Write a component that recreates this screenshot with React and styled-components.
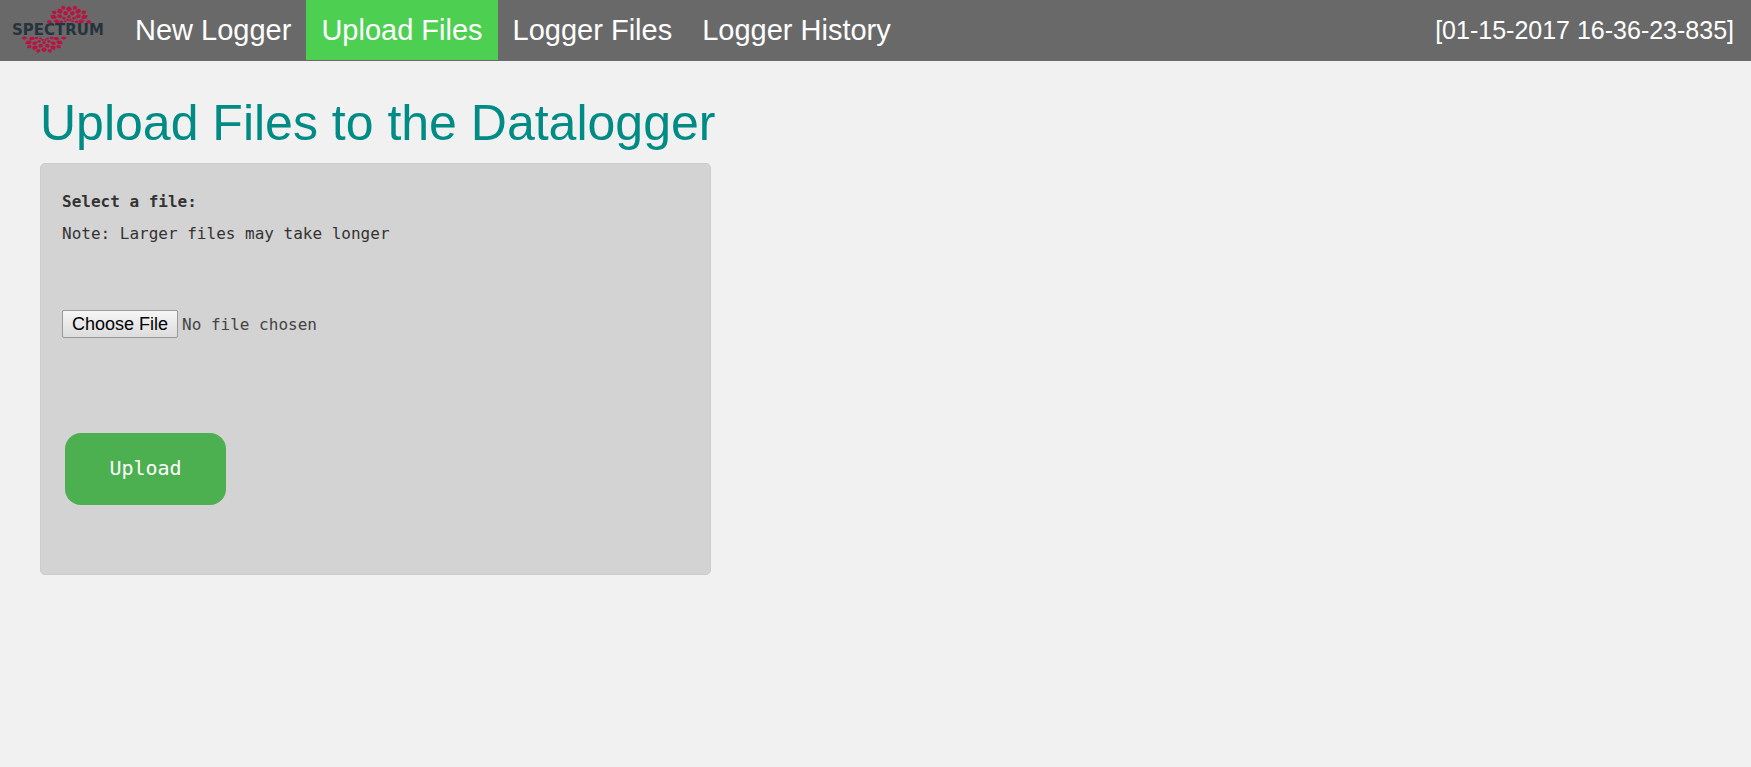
import React, { useId } from "react";
import styled, { createGlobalStyle } from "styled-components";

const sans = `"Liberation Sans", Arial, sans-serif`;
const mono = `"DejaVu Sans Mono", Consolas, monospace`;

const GlobalStyle = createGlobalStyle`
  *, *::before, *::after { box-sizing: border-box; }
  body {
    margin: 0;
    background: #f1f1f1;
    color: #333;
    font-family: ${sans};
  }
`;

const TopBar = styled.header`
  display: flex;
  align-items: flex-start;
  min-height: 61px;
  padding: 0 17px 0 12px;
  background: #696969;
`;

const LogoLink = styled.a`
  display: flex;
  padding-top: 4px;
  margin-right: 16px;
`;

const NavList = styled.nav`
  display: flex;
  flex: 1;
`;

const NavLink = styled.a`
  padding: 0 15px;
  font-size: 29px;
  line-height: 60px;
  color: #fff;
  text-decoration: none;
  white-space: nowrap;
  background: ${({ $active }) => ($active ? "#4dd052" : "transparent")};
`;

const Clock = styled.time`
  font-size: 25px;
  line-height: 60px;
  color: #fff;
  white-space: nowrap;
`;

const Page = styled.main`
  padding: 32px 40px;
`;

const Title = styled.h1`
  margin: 0 0 10px;
  font-size: 50px;
  font-weight: 400;
  line-height: 60px;
  color: #008b85;
`;

const UploadForm = styled.form`
  display: flex;
  flex-direction: column;
  align-items: flex-start;
  max-width: 671px;
  padding: 22px 21px 69px;
  font-family: ${mono};
  font-size: 16px;
  line-height: 32px;
  background: #d3d3d3;
  border: 1px solid #cbcbcb;
  border-radius: 5px;
`;

const FieldLabel = styled.label`
  font-weight: 700;
`;

const Note = styled.p`
  margin: 0;
`;

const FileInput = styled.input`
  margin: 60px 0 95px;
  height: 28px;
  font-family: ${mono};
  font-size: 16px;
  line-height: 28px;
  color: #444;

  &::file-selector-button {
    height: 28px;
    margin: 0 4px 0 0;
    padding: 0 9px;
    font-family: ${sans};
    font-size: 18px;
    line-height: 24px;
    color: #000;
    background: linear-gradient(#f6f6f6, #dcdcdc);
    border: 1px solid #9a9a9a;
    border-radius: 2px;
  }
`;

const UploadButton = styled.button`
  min-width: 161px;
  height: 72px;
  margin-left: 3px;
  padding-bottom: 3px;
  font-family: ${mono};
  font-size: 20px;
  color: #fff;
  background: #4caf50;
  border: 0;
  border-radius: 16px;
`;

/* Petals sit on half rings; every second ring is turned by half a step. */
const rings = [
  { r: 4, size: 1.3, angles: [-60, -20, 20, 60] },
  { r: 7.5, size: 1.8, angles: [-80, -40, 0, 40, 80] },
  { r: 12, size: 2.4, angles: [-80, -48, -16, 16, 48, 80] },
  { r: 16.5, size: 2.8, angles: [-64, -32, 0, 32, 64] },
  { r: 19, size: 2.2, angles: [-86, -48, -17, 17, 48, 86] },
];

function SpectrumLogo() {
  const petals = rings.flatMap(({ r, size, angles }) =>
    angles.map((angle) => (
      <path
        key={`${r}-${angle}`}
        transform={`rotate(${angle}) translate(0 ${-r})`}
        d={`M0 ${-size * 1.3} L${size} ${-size * 0.2} L${size * 0.5} ${size} L${-size * 0.5} ${size} L${-size} ${-size * 0.2}Z`}
      />
    ))
  );
  return (
    <svg width="92" height="52" viewBox="0 0 92 52" role="img" aria-label="Spectrum">
      <g fill="#bd1141">
        <g transform="translate(57 19) scale(1.04 0.84)">{petals}</g>
        <g transform="translate(32 33) rotate(180) scale(1.04 0.76)">{petals}</g>
      </g>
      <text x="0" y="31" fill="#26343d" fontFamily="DejaVu Sans, sans-serif" fontWeight="700" fontSize="15">
        SPECTRUM
      </text>
    </svg>
  );
}

const links = ["New Logger", "Upload Files", "Logger Files", "Logger History"];

export default function App() {
  const fileId = useId();
  return (
    <>
      <GlobalStyle />
      <TopBar>
        <LogoLink href="#home">
          <SpectrumLogo />
        </LogoLink>
        <NavList>
          {links.map((name) => (
            <NavLink key={name} href="#" $active={name === "Upload Files"}>
              {name}
            </NavLink>
          ))}
        </NavList>
        <Clock>[01-15-2017 16-36-23-835]</Clock>
      </TopBar>
      <Page>
        <Title>Upload Files to the Datalogger</Title>
        <UploadForm onSubmit={(e) => e.preventDefault()}>
          <FieldLabel htmlFor={fileId}>Select a file:</FieldLabel>
          <Note>Note: Larger files may take longer</Note>
          <FileInput id={fileId} type="file" />
          <UploadButton type="submit">Upload</UploadButton>
        </UploadForm>
      </Page>
    </>
  );
}
